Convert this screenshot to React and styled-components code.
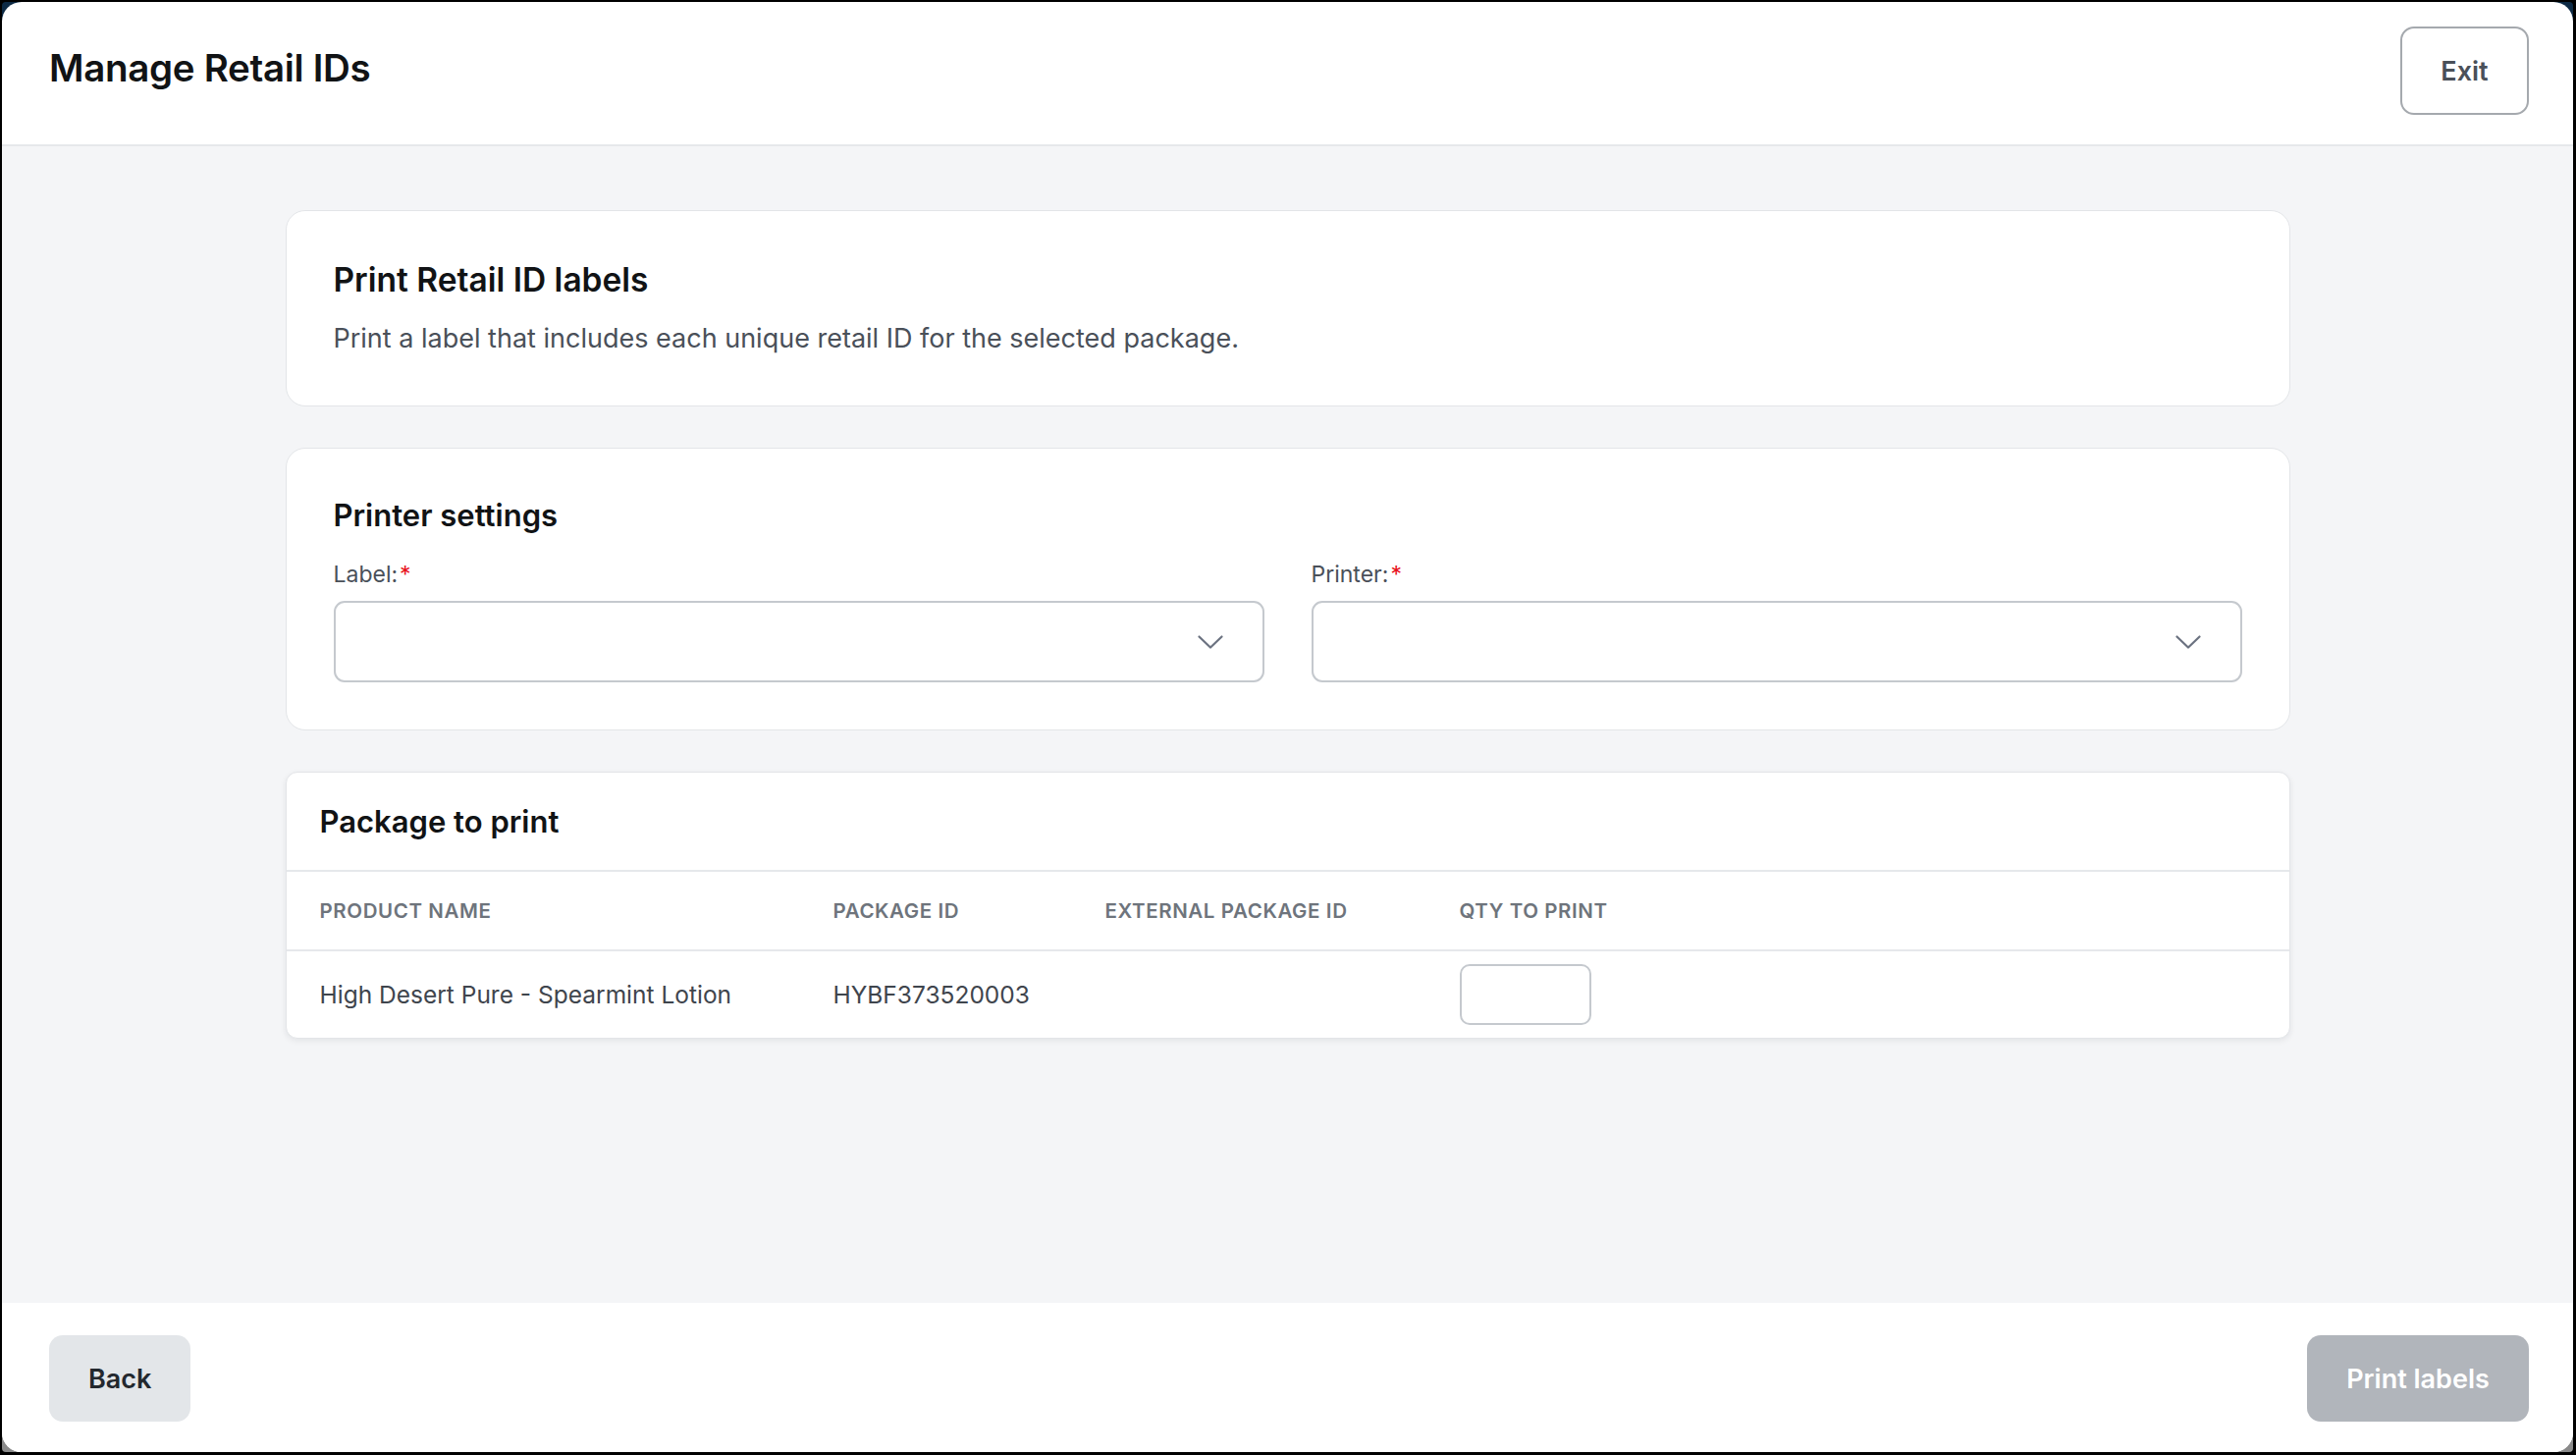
import React from "react";
import styled, { createGlobalStyle } from "styled-components";

const GlobalStyle = createGlobalStyle`
  html, body {
    margin: 0;
    padding: 0;
    background: #000;
  }
  body {
    font-family: Inter, "Noto Sans", "Liberation Sans", sans-serif;
    -webkit-font-smoothing: antialiased;
  }
  * { box-sizing: border-box; }
`;

const Backdrop = styled.div`
  height: 1482px;
  padding: 2px 3px 3px 2px;
  background: #000;
`;

const Underlay = styled.div`
  height: 100%;
  background: linear-gradient(to bottom, #0d2a45 0%, #0d2a45 50%, #9d9d9d 50%, #8a8a8a 100%);
  border-radius: 4px;
`;

const Modal = styled.div`
  height: 100%;
  display: flex;
  flex-direction: column;
  background: #fff;
  border-radius: 20px;
  overflow: hidden;
`;

const Header = styled.header`
  flex: none;
  height: 147px;
  display: flex;
  align-items: flex-start;
  justify-content: space-between;
  padding: 25px 45px 0 48px;
  border-bottom: 2px solid #e6e8eb;
`;

const PageTitle = styled.h1`
  margin: 20px 0 0;
  font-size: 38.5px;
  line-height: 44px;
  font-weight: 600;
  color: #111315;
  letter-spacing: -0.3px;
`;

const OutlineButton = styled.button`
  width: 131px;
  height: 90px;
  border: 2px solid #a5a9ae;
  border-radius: 14px;
  background: #fff;
  font-family: inherit;
  font-size: 27px;
  font-weight: 600;
  color: #4a5059;
  cursor: pointer;
`;

const Content = styled.main`
  flex: 1;
  background: #f4f5f7;
  display: flex;
  flex-direction: column;
  align-items: center;
  gap: 42px;
  padding-top: 65px;
`;

const Card = styled.section`
  width: 2042px;
  background: #fff;
  border: 1px solid #e3e5e8;
  border-radius: 20px;
  padding: ${(p) => p.$pad || "48px"};
`;

const TableCard = styled.section`
  width: 2042px;
  background: #fff;
  border: 1px solid #e3e5e8;
  border-radius: 12px;
  box-shadow: 0 2px 6px rgba(17, 24, 39, 0.08);
  overflow: hidden;
`;

const CardTitle = styled.h2`
  margin: 0;
  font-size: ${(p) => p.$size || 31}px;
  line-height: 44px;
  font-weight: 600;
  color: #111315;
`;

const CardText = styled.p`
  margin: 18px 0 0;
  font-size: 27px;
  line-height: 40px;
  color: #4a5059;
`;

const FieldRow = styled.div`
  display: grid;
  grid-template-columns: 1fr 1fr;
  gap: 48px;
  margin-top: 22px;
`;

const Field = styled.div`
  display: flex;
  flex-direction: column;
  gap: 11px;
`;

const FieldLabel = styled.label`
  font-size: 23px;
  line-height: 32px;
  color: #4a5059;
`;

const Required = styled.span`
  color: #e8111a;
  margin-left: 2px;
`;

const Select = styled.div`
  height: 83px;
  border: 2px solid #c5c9ce;
  border-radius: 11px;
  background: #fff;
  display: flex;
  align-items: center;
  justify-content: flex-end;
  padding-right: 40px;
  color: #6b7280;
`;

const TitleBar = styled.div`
  padding: 28px 34px 27px;
`;

const Row = styled.div`
  display: grid;
  grid-template-columns: 523px 277px 361px 1fr;
  align-items: center;
  padding-left: 34px;
  height: ${(p) => p.$h}px;
  border-top: 2px solid #e6e8eb;
`;

const HeadCell = styled.div`
  font-size: 20.5px;
  font-weight: 600;
  letter-spacing: 0.6px;
  text-transform: uppercase;
  color: #6e747c;
`;

const Cell = styled.div`
  font-size: 24.5px;
  color: #3f454d;
`;

const QtyInput = styled.input`
  width: 134px;
  height: 62px;
  border: 2px solid #c5c9ce;
  border-radius: 10px;
  background: #fff;
  font-family: inherit;
  font-size: 23px;
  padding: 0 12px;
  outline: none;
`;

const Footer = styled.footer`
  flex: none;
  height: 152px;
  background: #fff;
  display: flex;
  align-items: flex-start;
  justify-content: space-between;
  padding: 33px 45px 0 48px;
`;

const FooterButton = styled.button`
  height: 88px;
  padding: 0 40px;
  min-width: ${(p) => (p.$primary ? "226px" : "144px")};
  border: none;
  border-radius: 14px;
  background: ${(p) => (p.$primary ? "#b1b5bb" : "#e3e6e9")};
  color: ${(p) => (p.$primary ? "#ffffff" : "#23282e")};
  font-family: inherit;
  font-size: 27px;
  font-weight: 600;
  cursor: pointer;
`;

function Chevron() {
  return (
    <svg width="26" height="14" viewBox="0 0 26 14" fill="none">
      <polyline
        points="1.5,1.5 13,12.5 24.5,1.5"
        stroke="currentColor"
        strokeWidth="2.2"
        strokeLinecap="round"
        strokeLinejoin="round"
      />
    </svg>
  );
}

const columns = ["Product name", "Package ID", "External package ID", "Qty to print"];

export default function App() {
  return (
    <>
      <GlobalStyle />
      <Backdrop>
        <Underlay>
          <Modal>
            <Header>
              <PageTitle>Manage Retail IDs</PageTitle>
              <OutlineButton>Exit</OutlineButton>
            </Header>

            <Content>
              <Card>
                <CardTitle $size={33.5}>Print Retail ID labels</CardTitle>
                <CardText>
                  Print a label that includes each unique retail ID for the selected package.
                </CardText>
              </Card>

              <Card $pad="46px 48px 48px">
                <CardTitle>Printer settings</CardTitle>
                <FieldRow>
                  <Field>
                    <FieldLabel>
                      Label:<Required>*</Required>
                    </FieldLabel>
                    <Select>
                      <Chevron />
                    </Select>
                  </Field>
                  <Field>
                    <FieldLabel>
                      Printer:<Required>*</Required>
                    </FieldLabel>
                    <Select>
                      <Chevron />
                    </Select>
                  </Field>
                </FieldRow>
              </Card>

              <TableCard>
                <TitleBar>
                  <CardTitle>Package to print</CardTitle>
                </TitleBar>
                <Row $h={81}>
                  {columns.map((c) => (
                    <HeadCell key={c}>{c}</HeadCell>
                  ))}
                </Row>
                <Row $h={90}>
                  <Cell>High Desert Pure - Spearmint Lotion</Cell>
                  <Cell>HYBF373520003</Cell>
                  <Cell />
                  <div>
                    <QtyInput type="text" />
                  </div>
                </Row>
              </TableCard>
            </Content>

            <Footer>
              <FooterButton>Back</FooterButton>
              <FooterButton $primary>Print labels</FooterButton>
            </Footer>
          </Modal>
        </Underlay>
      </Backdrop>
    </>
  );
}
